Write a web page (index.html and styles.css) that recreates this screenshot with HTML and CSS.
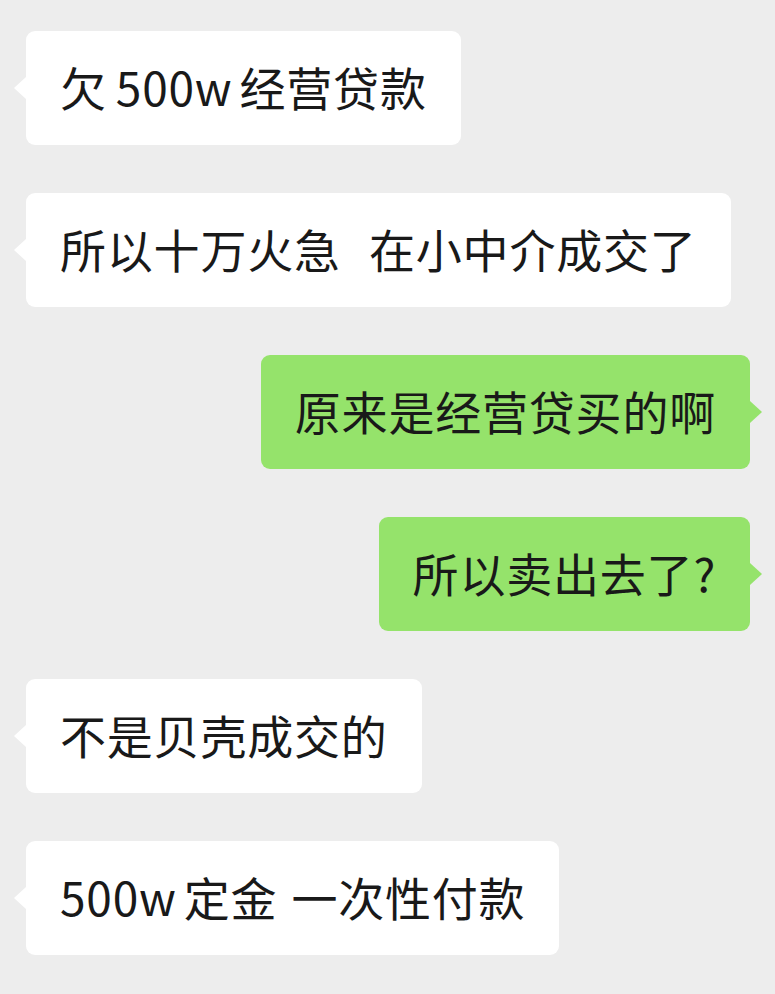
FILE: index.html
```html
<!DOCTYPE html>
<html lang="zh-CN">
<head>
  <meta charset="UTF-8" />
  <meta name="viewport" content="width=device-width, initial-scale=1.0" />
  <title>聊天记录</title>
  <link rel="stylesheet" href="styles.css">
</head>
<body>
  <main class="chat">
    <div class="msg left"><div class="bubble">欠<span class="lat">500w</span>经营贷款</div></div>
    <div class="msg left"><div class="bubble">所以十万火急&nbsp;&nbsp;在小中介成交了</div></div>
    <div class="msg right"><div class="bubble">原来是经营贷买的啊</div></div>
    <div class="msg right"><div class="bubble">所以卖出去了?</div></div>
    <div class="msg left"><div class="bubble">不是贝壳成交的</div></div>
    <div class="msg left"><div class="bubble"><span class="lat lead">500w</span>定金 一次性付款</div></div>
  </main>
</body>
</html>
```

FILE: styles.css
```css
:root {
  --bg-color: #ededed;
  --their-color: #ffffff;
  --my-color: #95e36b;
  --text-color: #191919;
}

* {
  box-sizing: border-box;
}

body {
  margin: 0;
  background: var(--bg-color);
  color: var(--text-color);
  font-family: "Noto Sans CJK SC", "Noto Sans", sans-serif;
}

.chat {
  display: flex;
  flex-direction: column;
  gap: 48px;
  padding: 31px 25px 40px 26px;
}

.msg {
  display: flex;
}

.msg.left { justify-content: flex-start; }
.msg.right { justify-content: flex-end; }

.bubble {
  position: relative;
  height: 114px;
  padding: 0 34px;
  border-radius: 9px;
  font-size: 46px;
  line-height: 110px;
  letter-spacing: 0.8px;
  word-spacing: 3px;
  white-space: pre;
}

/* latin runs get a bit of air next to the hanzi */
.lat {
  margin: 0 7px 0 9px;
}

.lat.lead {
  margin-left: 0;
}

.left .bubble { background: var(--their-color); }
.right .bubble { background: var(--my-color); }

/* little tail pointing at the speaker */
.bubble::before {
  content: "";
  position: absolute;
  top: 50%;
  margin-top: -11px;
  border-top: 11px solid transparent;
  border-bottom: 11px solid transparent;
}

.left .bubble::before {
  left: -12px;
  border-right: 12px solid var(--their-color);
}

.right .bubble::before {
  right: -12px;
  border-left: 12px solid var(--my-color);
}
```
